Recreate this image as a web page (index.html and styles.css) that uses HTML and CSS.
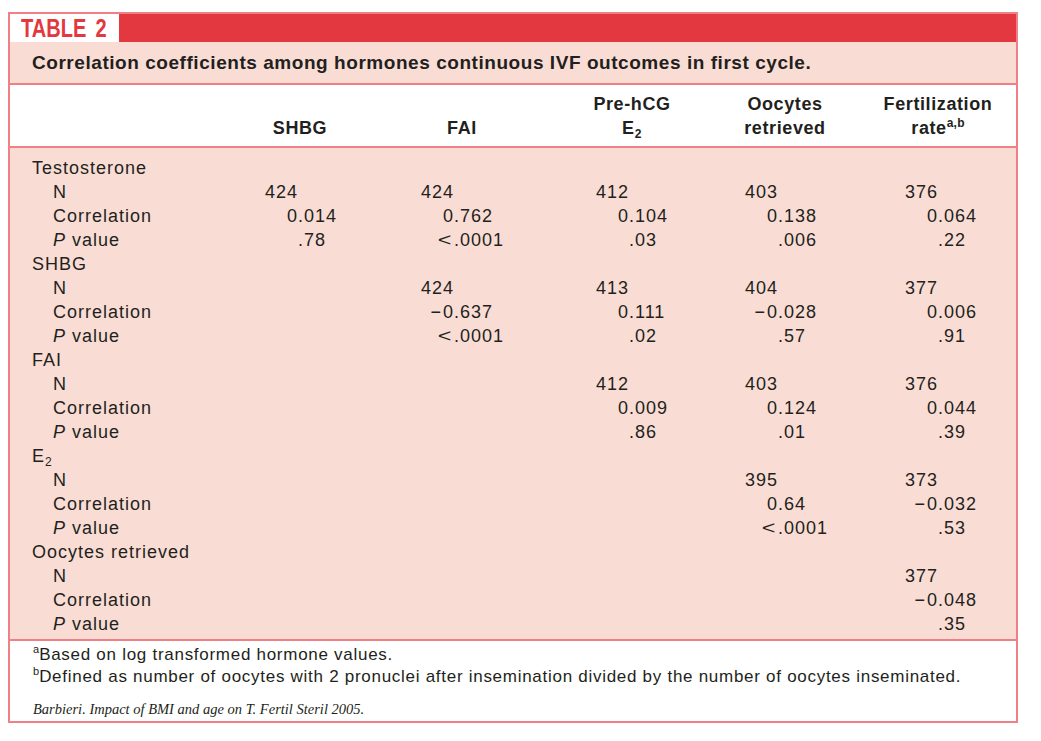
FILE: index.html
```html
<!DOCTYPE html>
<html lang="en">
<head>
<meta charset="utf-8">
<title>Table 2</title>
<link rel="stylesheet" href="styles.css">
</head>
<body>
<div class="tbl">
  <div class="title-bar"><div class="title-tab"><span class="title-text">TABLE<span class="gap"></span>2</span></div></div>
  <div class="caption">Correlation coefficients among hormones continuous IVF outcomes in first cycle.</div>
  <div class="head grid">
    <div></div>
    <div class="hc">SHBG</div>
    <div class="hc">FAI</div>
    <div class="hc">Pre-hCG<br>E<sub>2</sub></div>
    <div class="hc">Oocytes<br>retrieved</div>
    <div class="hc">Fertilization<br>rate<sup>a,b</sup></div>
  </div>
  <div class="body">
    <div class="grid row"><div class="lbl">Testosterone</div><div></div><div></div><div></div><div></div><div></div></div>
    <div class="grid row"><div class="lbl sub">N</div><div class="n">424</div><div class="n">424</div><div class="n">412</div><div class="n">403</div><div class="n">376</div></div>
    <div class="grid row"><div class="lbl sub">Correlation</div><div><span class="ip">0</span>.014</div><div><span class="ip">0</span>.762</div><div><span class="ip">0</span>.104</div><div><span class="ip">0</span>.138</div><div><span class="ip">0</span>.064</div></div>
    <div class="grid row"><div class="lbl sub"><i>P</i> value</div><div><span class="ip"></span>.78</div><div><span class="ip"><span class="lt">&lt;</span></span>.0001</div><div><span class="ip"></span>.03</div><div><span class="ip"></span>.006</div><div><span class="ip"></span>.22</div></div>

    <div class="grid row"><div class="lbl">SHBG</div><div></div><div></div><div></div><div></div><div></div></div>
    <div class="grid row"><div class="lbl sub">N</div><div></div><div class="n">424</div><div class="n">413</div><div class="n">404</div><div class="n">377</div></div>
    <div class="grid row"><div class="lbl sub">Correlation</div><div></div><div><span class="ip"><span class="sg">&minus;</span>0</span>.637</div><div><span class="ip">0</span>.111</div><div><span class="ip"><span class="sg">&minus;</span>0</span>.028</div><div><span class="ip">0</span>.006</div></div>
    <div class="grid row"><div class="lbl sub"><i>P</i> value</div><div></div><div><span class="ip"><span class="lt">&lt;</span></span>.0001</div><div><span class="ip"></span>.02</div><div><span class="ip"></span>.57</div><div><span class="ip"></span>.91</div></div>

    <div class="grid row"><div class="lbl">FAI</div><div></div><div></div><div></div><div></div><div></div></div>
    <div class="grid row"><div class="lbl sub">N</div><div></div><div></div><div class="n">412</div><div class="n">403</div><div class="n">376</div></div>
    <div class="grid row"><div class="lbl sub">Correlation</div><div></div><div></div><div><span class="ip">0</span>.009</div><div><span class="ip">0</span>.124</div><div><span class="ip">0</span>.044</div></div>
    <div class="grid row"><div class="lbl sub"><i>P</i> value</div><div></div><div></div><div><span class="ip"></span>.86</div><div><span class="ip"></span>.01</div><div><span class="ip"></span>.39</div></div>

    <div class="grid row"><div class="lbl">E<sub>2</sub></div><div></div><div></div><div></div><div></div><div></div></div>
    <div class="grid row"><div class="lbl sub">N</div><div></div><div></div><div></div><div class="n">395</div><div class="n">373</div></div>
    <div class="grid row"><div class="lbl sub">Correlation</div><div></div><div></div><div></div><div><span class="ip">0</span>.64</div><div><span class="ip"><span class="sg">&minus;</span>0</span>.032</div></div>
    <div class="grid row"><div class="lbl sub"><i>P</i> value</div><div></div><div></div><div></div><div><span class="ip"><span class="lt">&lt;</span></span>.0001</div><div><span class="ip"></span>.53</div></div>

    <div class="grid row"><div class="lbl">Oocytes retrieved</div><div></div><div></div><div></div><div></div><div></div></div>
    <div class="grid row"><div class="lbl sub">N</div><div></div><div></div><div></div><div></div><div class="n">377</div></div>
    <div class="grid row"><div class="lbl sub">Correlation</div><div></div><div></div><div></div><div></div><div><span class="ip"><span class="sg">&minus;</span>0</span>.048</div></div>
    <div class="grid row"><div class="lbl sub"><i>P</i> value</div><div></div><div></div><div></div><div></div><div><span class="ip"></span>.35</div></div>
  </div>
  <div class="foot">
    <p class="note"><sup>a</sup>Based on log transformed hormone values.</p>
    <p class="note"><sup>b</sup>Defined as number of oocytes with 2 pronuclei after insemination divided by the number of oocytes inseminated.</p>
    <p class="cite">Barbieri. Impact of BMI and age on T. Fertil Steril 2005.</p>
  </div>
</div>
</body>
</html>
```
FILE: styles.css
```css
html, body {
  margin: 0;
  padding: 0;
  background: #ffffff;
}

body {
  font-family: "Liberation Sans", Arial, Helvetica, sans-serif;
  color: #231f20;
}

.tbl {
  box-sizing: border-box;
  width: 1010px;
  margin: 12px 0 0 8px;
  border: 2px solid #ef8085;
}

.title-bar {
  height: 28px;
  background: #e3383f;
  display: flex;
}

.title-tab {
  width: 109px;
  background: #ffffff;
  display: flex;
  align-items: center;
  overflow: hidden;
}

.title-text {
  display: inline-block;
  font-weight: bold;
  font-size: 26px;
  line-height: 28px;
  color: #e3383f;
  transform: scaleX(0.77);
  transform-origin: 0 50%;
  margin-left: 11px;
  white-space: nowrap;
}

.title-text .gap {
  display: inline-block;
  width: 12px;
}

.caption {
  background: #f9ddd4;
  border-bottom: 2px solid #ef8085;
  box-sizing: border-box;
  height: 43px;
  padding: 9px 0 0 22px;
  font-weight: bold;
  font-size: 19px;
  line-height: 24px;
  letter-spacing: 0.55px;
  white-space: nowrap;
}

.grid {
  display: grid;
  grid-template-columns: 198px 140px 184px 156px 150px 1fr;
  padding-left: 22px;
}

.grid > :nth-child(2) { --n: 35px; }
.grid > :nth-child(3) { --n: 51px; }
.grid > :nth-child(4) { --n: 42px; }
.grid > :nth-child(5) { --n: 35px; }
.grid > :nth-child(6) { --n: 45px; }

.head {
  height: 63px;
  box-sizing: border-box;
  border-bottom: 2px solid #ef8085;
  padding-top: 5px;
  align-items: end;
  font-weight: bold;
  font-size: 18px;
  line-height: 24px;
  letter-spacing: 0.6px;
  padding-bottom: 6px;
}

.hc {
  text-align: center;
}

.hc sub {
  font-size: 12px;
  line-height: 0;
  vertical-align: -4px;
}

.hc sup {
  font-size: 12px;
  line-height: 0;
  vertical-align: 7px;
  letter-spacing: 0.2px;
}

.body {
  background: #f9ddd4;
  border-bottom: 2px solid #ef8085;
  padding: 8px 0 3px;
  font-size: 18px;
  line-height: 24px;
  letter-spacing: 1px;
}

.row {
  height: 24px;
  white-space: nowrap;
}

.lbl sub {
  font-size: 12px;
  line-height: 0;
  vertical-align: -4px;
}

.sub {
  padding-left: 21px;
}

.n {
  padding-left: var(--n);
}

.ip {
  display: inline-block;
  width: calc(var(--n) + 33px);
  text-align: right;
}

.sg {
  letter-spacing: 0;
  margin-right: 2px;
}

.lt {
  display: inline-block;
  letter-spacing: 0;
  transform: scaleX(1.3);
  transform-origin: 100% 50%;
  margin-right: 2px;
}

.foot {
  padding: 3px 0 3px 23px;
}

.note {
  margin: 0;
  font-size: 17px;
  line-height: 22px;
  letter-spacing: 0.72px;
  white-space: nowrap;
}

.note sup {
  font-size: 11px;
  line-height: 0;
  vertical-align: 7px;
  letter-spacing: 0;
}

.cite {
  margin: 13px 0 0;
  font-family: "Liberation Serif", "Times New Roman", serif;
  font-style: italic;
  font-size: 14.5px;
  line-height: 17px;
}
```
